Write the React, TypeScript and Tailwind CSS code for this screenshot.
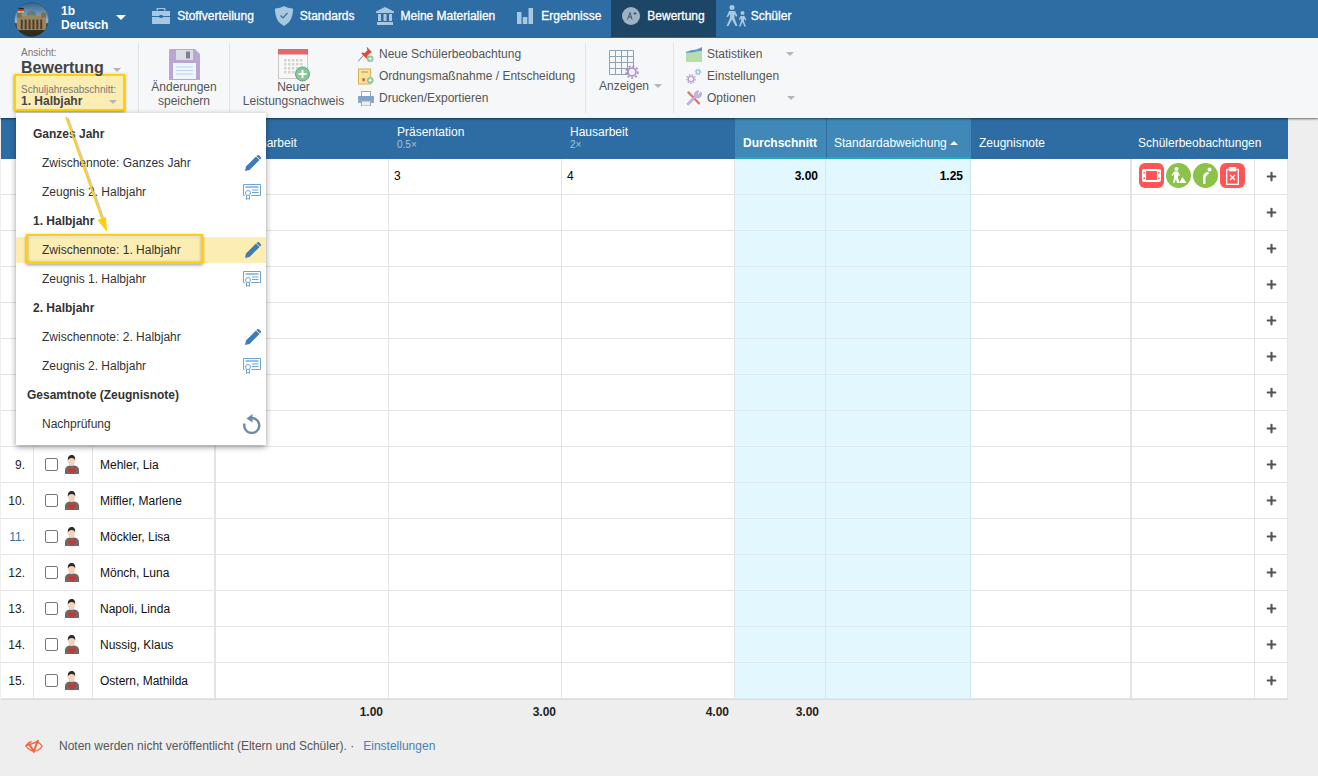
import React from 'react';
import { Plus } from 'lucide-react';

const COLS = 'grid grid-cols-[33px_59px_123px_173px_173px_173px_91px_145px_161px_123px_33px]';

const students: Record<number, string> = {
  9: 'Mehler, Lia',
  10: 'Miffler, Marlene',
  11: 'Möckler, Lisa',
  12: 'Mönch, Luna',
  13: 'Napoli, Linda',
  14: 'Nussig, Klaus',
  15: 'Ostern, Mathilda',
};

const Caret = ({ className = 'border-t-[#b5b5b5]' }: { className?: string }) => (
  <span className={`inline-block w-0 h-0 border-x-[4px] border-x-transparent border-t-[4px] ${className}`} />
);

const Logo = () => (
  <svg width="35" height="35" viewBox="0 0 36 36" className="shrink-0">
    <defs>
      <clipPath id="logoClip"><circle cx="18" cy="18" r="17.500" /></clipPath>
      <linearGradient id="logoSky" x1="0" y1="0" x2="0" y2="1">
        <stop offset="0" stopColor="#2f5f8c" />
        <stop offset="1" stopColor="#a9c3d6" />
      </linearGradient>
    </defs>
    <g clipPath="url(#logoClip)">
      <rect width="36" height="22" fill="url(#logoSky)" />
      <rect y="22" width="36" height="14" fill="#5a4a30" />
      <rect x="3" y="14" width="30" height="15" fill="#9a8560" />
      <path d="M13 14 a5 5 0 0 1 10 0z" fill="#66797c" />
      <rect x="3" y="11" width="5" height="5" fill="#7f6d4c" />
      <rect x="28" y="11" width="5" height="5" fill="#7f6d4c" />
      {[7, 11, 15, 19, 23, 27].map((x) => (
        <rect key={x} x={x} y="18" width="2" height="10" fill="#4b3d28" />
      ))}
      <rect x="4" y="6" width="6" height="1.600" fill="#222" />
      <rect x="4" y="7.600" width="6" height="1.600" fill="#d22" />
      <rect x="4" y="9.200" width="6" height="1.600" fill="#ec3" />
      <rect y="29" width="36" height="7" fill="#2f2c1e" />
      <circle cx="18" cy="18" r="17.500" fill="none" stroke="#1f3346" strokeOpacity="0.500" />
    </g>
  </svg>
);

const NAV = '#a9c8e0';

const navIcons = {
  briefcase: (
    <svg width="18" height="16" viewBox="0 0 18 16" fill={NAV}>
      <path d="M6 2.500V1h6v1.500h1.500V1a1 1 0 0 0-1-1h-7a1 1 0 0 0-1 1v1.500z" />
      <path d="M0 3h18v5H10.500V7h-3v1H0z" />
      <path d="M0 9h7.500v1h3V9H18v7H0z" />
    </svg>
  ),
  shield: (
    <svg width="18" height="20" viewBox="0 0 18 20">
      <path d="M9 0c2.500 1.600 5.500 2.400 9 2.600 0 7.500-1.800 13.600-9 17.400C1.800 16.200 0 10.100 0 2.600 3.500 2.400 6.500 1.600 9 0z" fill={NAV} />
      <path d="M5.500 9.500 8 12l4.500-5" stroke="#2d6da3" strokeWidth="1.200" fill="none" />
    </svg>
  ),
  bank: (
    <svg width="18" height="18" viewBox="0 0 18 18" fill={NAV}>
      <path d="M9 0 18 4.500V6H0V4.500z" />
      <rect x="2" y="7" width="3" height="7" />
      <rect x="7.500" y="7" width="3" height="7" />
      <rect x="13" y="7" width="3" height="7" />
      <rect x="1" y="15" width="16" height="3" />
    </svg>
  ),
  bars: (
    <svg width="16" height="16" viewBox="0 0 16 16" fill={NAV}>
      <rect x="0" y="4" width="4.500" height="12" />
      <rect x="5.800" y="9" width="4.500" height="7" />
      <rect x="11.500" y="0" width="4.500" height="16" />
    </svg>
  ),
  grade: (
    <svg width="18" height="18" viewBox="0 0 18 18">
      <circle cx="9" cy="9" r="9" fill="#9fb2c2" />
      <path d="M5.500 12.500 8 5.500l2 7M6.500 10h3M11.500 6.500h3M13 5v3" stroke="#2c5473" strokeWidth="0.900" fill="none" />
    </svg>
  ),
  people: (
    <svg width="23" height="22" viewBox="0 0 23 22" fill={NAV}>
      <circle cx="7" cy="2.500" r="2.500" />
      <path d="M4 6h6l2.500 5-1.500.8L9.500 9v4l3 8h-2L7 14.500 3.500 21h-2L5 13V9L3 12H1.500z" />
      <circle cx="17.500" cy="8" r="2" />
      <path d="M15.500 11h4l2 4-1.200.6-1.300-2v3l2 5h-1.600L17.500 17l-2 4.600H14l2-5.600v-3l-1 2-1.200-.6z" />
    </svg>
  ),
};

const navItems = [
  { icon: navIcons.briefcase, label: 'Stoffverteilung', cls: 'pl-[10px] pr-[11px]' },
  { icon: navIcons.shield, label: 'Standards', cls: 'pl-[10px] pr-[10px]' },
  { icon: navIcons.bank, label: 'Meine Materialien', cls: 'pl-[11px] pr-[11px]' },
  { icon: navIcons.bars, label: 'Ergebnisse', cls: 'pl-[11px] pr-[10px] !gap-[8px]' },
  { icon: navIcons.grade, label: 'Bewertung', cls: 'pl-[11px] pr-[11px]', active: true },
  { icon: navIcons.people, label: 'Schüler', cls: 'pl-[9px] !gap-[3px]' },
];

const Floppy = () => (
  <svg width="31" height="31" viewBox="0 0 31 31">
    <path d="M1 0h25l5 5v26H0V1z" fill="#b9a6d3" />
    <rect x="7" y="1" width="17" height="10" fill="#dcdce4" />
    <rect x="17" y="2.500" width="4" height="7" fill="#7b8494" />
    <rect x="4" y="14" width="23" height="16" fill="#eef6fb" />
    <path d="M7 18h17M7 21.500h17M7 25h17" stroke="#b7d4e8" strokeWidth="1" />
  </svg>
);

const CalendarAdd = () => (
  <svg width="32" height="33" viewBox="0 0 32 33">
    <rect x="0.500" y="0.500" width="29" height="29" fill="#f8f8f8" stroke="#c9c9c9" />
    <rect x="0" y="0" width="30" height="5.500" fill="#e2676b" />
    {[0, 1, 2, 3].map((r) =>
      [0, 1, 2, 3, 4].map((c) => (
        <rect key={`${r}-${c}`} x={6 + c * 4} y={10 + r * 4} width="2.500" height="2.500" fill="#d3d3d3" />
      ))
    )}
    <circle cx="24.500" cy="25" r="7" fill="#86c79b" stroke="#5fa87b" />
    <path d="M24.500 21v8M20.500 25h8" stroke="#fff" strokeWidth="1.800" />
  </svg>
);

const Pin = () => (
  <svg width="17" height="17" viewBox="0 0 17 17">
    <path d="M0 16 6 9" stroke="#777" strokeWidth="1" />
    <path d="M9 0l6 6-2 .8-3 3 .5 2.500-1 1L3.500 7.500l1-1L7 7l3-3z" fill="#e24a3d" />
    <circle cx="13" cy="13" r="3.500" fill="#86c79b" />
    <path d="M13 11v4M11 13h4" stroke="#fff" />
  </svg>
);

const Order = () => (
  <svg width="17" height="17" viewBox="0 0 17 17">
    <rect x="0.500" y="0.500" width="13" height="16" fill="#f6e3a0" stroke="#d6ae45" />
    <rect x="3.500" y="3" width="7" height="1.500" fill="#c9a850" />
    <circle cx="6" cy="12" r="1.800" fill="#d86a5c" />
    <circle cx="13" cy="12.500" r="3.500" fill="#86c79b" />
    <path d="M13 10.500v4M11 12.500h4" stroke="#fff" />
  </svg>
);

const Printer = () => (
  <svg width="16" height="15" viewBox="0 0 16 15">
    <rect x="3.500" y="0.500" width="9" height="5" fill="#fff" stroke="#9aa8b8" />
    <rect x="0" y="5" width="16" height="4" rx="1" fill="#7ea2cf" />
    <rect x="0" y="9" width="16" height="3" fill="#9aa7b4" />
    <rect x="3.500" y="10" width="9" height="5" fill="#e8eef4" stroke="#9aa8b8" />
  </svg>
);

const GridGear = () => (
  <svg width="30" height="30" viewBox="0 0 30 30">
    <path d="M.5.500h24v24H.5zM.5 6.500h24M.5 12.500h24M.5 18.500h24M6.500.500v24M12.500.500v24M18.500.500v24" fill="none" stroke="#8fa3b3" />
    <circle cx="23" cy="22" r="4" fill="#f3f0f8" stroke="#a68fc9" strokeWidth="1.600" />
    <circle cx="23" cy="22" r="6" fill="none" stroke="#a68fc9" strokeWidth="1.600" strokeDasharray="2 2" />
  </svg>
);

const ChartArea = () => (
  <svg width="16" height="15" viewBox="0 0 16 15">
    <path d="M0 5c3-1 4-2 7-2s5-1 9-3v8H0z" fill="#5b93d3" />
    <path d="M0 6c3-1 5 0 8-1s5-1 8-1v11H0z" fill="#b7dcae" />
  </svg>
);

const Gears = () => (
  <svg width="16" height="16" viewBox="0 0 16 16">
    <circle cx="5" cy="11" r="2.800" fill="#f6f7f9" stroke="#b8a6d8" strokeWidth="1.600" />
    <circle cx="5" cy="11" r="4.400" fill="none" stroke="#b8a6d8" strokeWidth="1.200" strokeDasharray="1.500 1.500" />
    <circle cx="12" cy="4" r="1.800" fill="none" stroke="#8cc4e0" strokeWidth="1.300" />
    <circle cx="12" cy="4" r="3" fill="none" stroke="#8cc4e0" strokeWidth="1" strokeDasharray="1.200 1.200" />
  </svg>
);

const Tools = () => (
  <svg width="16" height="16" viewBox="0 0 16 16">
    <path d="M1 2.500 2.500 1 6 4.500l8 8.500a1.300 1.300 0 0 1-1.500 1.500L4.500 6z" fill="#ec6a5e" />
    <path d="M15 2 12.500 4.500 11 3.500l2-2.500a3.800 3.800 0 0 0-4.500 4.800L1 13.500c-.3.800.5 1.800 1.500 1.500l7.700-7.500A3.800 3.800 0 0 0 15 2z" fill="#c4b5e0" stroke="#9f8cc0" strokeWidth="0.500" />
  </svg>
);

const Pencil = () => (
  <svg width="16" height="16" viewBox="0 0 16 16" fill="#3d7cb5">
    <path d="M0 16l1-4.500L11 1.500l3.500 3.500-10 10z" />
    <path d="M12 .5c.7-.7 1.500-.7 2.200 0l1.300 1.300c.7.7.7 1.500 0 2.200L15 4.500 11.500 1z" />
  </svg>
);

const Certificate = () => (
  <svg width="18" height="16" viewBox="0 0 18 16" fill="none" stroke="#6aa5d6">
    <path d="M1.800 11.500H.5v-11h17v11H8.200" />
    <path d="M2.500 3h13" strokeWidth="1.400" />
    <path d="M9 6h6.500M9 8.500h6.500" />
    <circle cx="5" cy="9" r="2.500" />
    <path d="M3.500 11.500V15.500L5 14.300l1.500 1.200v-4" />
  </svg>
);

const Undo = () => (
  <svg width="18" height="20" viewBox="0 0 18 20" fill="none">
    <path d="M6 4.500a7.500 7.500 0 1 1-4.500 5" stroke="#6e8da3" strokeWidth="2.400" />
    <path d="M9.500 0v8.500L3.500 4.500z" fill="#6e8da3" />
  </svg>
);

const Person = () => (
  <svg width="14" height="19" viewBox="0 0 14 19" className="shrink-0">
    <path d="M0 19v-4C0 12 2.500 11 4.500 10.500h5c2 .5 4.500 1.500 4.500 4.500v4z" fill="#6b6b6b" />
    <path d="M4 11l3 3.500 3-3.500 .8 4.500L7 19l-3.800-3.500z" fill="#d0332e" />
    <ellipse cx="6.500" cy="6" rx="3.500" ry="4.800" fill="#f6d2bd" />
    <path d="M2.800 5.500C2.500 1.500 4.500 0 6.700 0c2.300 0 3.800 1.500 3.500 5.500-.5-1.500-1.500-2.500-3.500-2.500S3.500 4 2.800 5.500z" fill="#2b2b2b" />
  </svg>
);

const EyeOff = () => (
  <svg width="18" height="14" viewBox="0 0 18 14" fill="none" stroke="#f4633c" strokeWidth="1.300">
    <path d="M.8 7C2.800 4.300 4.500 3 6.500 2.500M12 2.800c2.200.8 3.800 2.200 5.200 4.200C15 10.500 12 12 9 12c-1 0-2-.2-3-.6C3.800 10.600 2.200 9 .8 7z" />
    <path d="M4.500 5.500 8.800 12.500 13 1" strokeWidth="2" />
  </svg>
);

const ObsIcon = ({ round, color, children }: { round?: boolean; color: string; children: React.ReactNode }) => (
  <span className={`w-[25px] h-[25px] flex items-center justify-center ${round ? 'rounded-full' : 'rounded-[6px]'} ${color}`}>
    {children}
  </span>
);

const ToolButton = ({ icon, label, caret }: { icon: React.ReactNode; label: string; caret?: boolean }) => (
  <div className="flex items-center h-[22px]">
    <span className="w-[16px] flex justify-center shrink-0">{icon}</span>
    <span className="ml-[5px]">{label}</span>
    {caret && <span className="ml-[24px] flex"><Caret /></span>}
  </div>
);

const Ribbon = () => (
  <div className="h-[80px] bg-[#f6f7f9] flex py-[5px] text-[12px] leading-[14px] text-[#555] shadow-[0_1px_2px_rgba(0,0,0,0.55)] relative z-10">
    <div className="w-[139px] border-r border-[#e2e3e5] pl-[14px] pt-[5px]">
      <div className="pl-[7px] text-[10px] leading-[10px] text-[#777]">Ansicht:</div>
      <div className="pl-[7px] flex items-center h-[16px] pt-[4px]">
        <span className="text-[16px] font-bold text-[#444]">Bewertung</span>
        <span className="ml-[9px] mt-[3px] flex"><Caret /></span>
      </div>
      <div className="w-[111px] h-[37px] border-[2.500px] border-[#ffcf0a] bg-[#fcedb2] pl-[5px] pr-[6px] pt-[8px] shadow-[0_1px_3px_rgba(0,0,0,0.45)]">
        <div className="text-[10px] leading-[11px] text-[#777]">Schuljahresabschnitt:</div>
        <div className="flex items-center justify-between">
          <span className="text-[12px] font-bold text-[#444] leading-[13px]">1. Halbjahr</span>
          <Caret />
        </div>
      </div>
    </div>
    <div className="w-[91px] border-r border-[#e2e3e5] flex flex-col items-center pt-[6px]">
      <Floppy />
      <div className="text-center">Änderungen<br />speichern</div>
    </div>
    <div className="w-[356px] border-r border-[#e2e3e5] flex">
      <div className="w-[127px] flex flex-col items-center pt-[6px]">
        <CalendarAdd />
        <div className="text-center mt-[-2px]"><span>Neuer</span><br />Leistungsnachweis</div>
      </div>
      <div className="pl-px">
        <ToolButton icon={<Pin />} label="Neue Schülerbeobachtung" />
        <ToolButton icon={<Order />} label="Ordnungsmaßnahme / Entscheidung" />
        <ToolButton icon={<Printer />} label="Drucken/Exportieren" />
      </div>
    </div>
    <div className="w-[88px] border-r border-[#e2e3e5] flex flex-col pl-[13px] pt-[7px]">
      <span className="pl-[10px]"><GridGear /></span>
      <div className="flex items-center mt-[-1px]">
        <span>Anzeigen</span>
        <span className="ml-[5px] flex"><Caret /></span>
      </div>
    </div>
    <div className="pl-[12px]">
      <ToolButton icon={<ChartArea />} label="Statistiken" caret />
      <ToolButton icon={<Gears />} label="Einstellungen" />
      <div className="flex items-center h-[22px]">
        <span className="w-[16px] flex justify-center shrink-0"><Tools /></span>
        <span className="ml-[5px]">Optionen</span>
        <span className="ml-[31px] flex"><Caret /></span>
      </div>
    </div>
  </div>
);

const HeaderCell = ({ label, weight, className = '', children }: { label?: string; weight?: string; className?: string; children?: React.ReactNode }) => (
  <div className={`flex flex-col justify-end pb-[9px] pl-[8px] text-[12px] leading-[14px] text-white ${className}`}>
    {label && <span className="flex items-center">{label}{children}</span>}
    {weight && <span className="text-[10px] leading-[12px] text-[#a7c3da]">{weight}</span>}
  </div>
);

const TableHeader = () => (
  <div className={`${COLS} h-[41px] w-[1287px] bg-[#2d6da3] ml-px`}>
    <div className="col-span-3" />
    <HeaderCell label="Klassenarbeit" />
    <HeaderCell label="Präsentation" weight="0.5×" className="!pb-[8px]" />
    <HeaderCell label="Hausarbeit" weight="2×" className="!pb-[8px]" />
    <HeaderCell label="Durchschnitt" className="bg-[#3f88b8] border-b-2 border-b-[#1fa8bf] font-bold !pb-[7px]" />
    <HeaderCell
      label="Standardabweichung"
      className="bg-[#3f88b8] border-l border-l-[#2d6da3] border-b-2 border-b-[#1fa8bf] !pb-[7px] !pl-[7px]"
    >
      <span className="ml-[3px] w-0 h-0 border-x-[4px] border-x-transparent border-b-[4px] border-b-white" />
    </HeaderCell>
    <HeaderCell label="Zeugnisnote" />
    <HeaderCell label="Schülerbeobachtungen" className="col-span-2 !pl-[6px]" />
  </div>
);

const Row = ({ n }: { n: number }) => {
  const name = students[n];
  const cell = 'border-r border-[#e4e4e4] border-b flex items-center';
  const teal = 'bg-[#e3f7fe] border-b border-b-[#d5ecf4] border-r border-r-[#cfe7ef] flex items-center justify-end pr-[7px] font-bold text-black';
  return (
    <div className={`${COLS} h-[36px] w-[1287px] bg-white text-[12px] text-[#222]`}>
      <div className={`${cell} justify-end pr-[8px] ${n === 11 ? 'text-[#2a76b5]' : ''}`}>{name ? `${n}.` : ''}</div>
      <div className={`${cell} pl-[11px] gap-[7px]`}>
        {name && <span className="w-[13px] h-[13px] border border-[#767676] rounded-[2px] bg-white shrink-0" />}
        {name && <Person />}
      </div>
      <div className={`${cell} border-r-2 pl-[7px] text-[#111]`}>{name}</div>
      <div className={cell} />
      <div className={`${cell} pl-[5px] pb-[2px] text-black`}>{n === 1 ? '3' : ''}</div>
      <div className={`${cell} pl-[5px] pb-[2px] text-black`}>{n === 1 ? '4' : ''}</div>
      <div className={`${teal} pb-[2px]`}>{n === 1 ? '3.00' : ''}</div>
      <div className={`${teal} pb-[2px]`}>{n === 1 ? '1.25' : ''}</div>
      <div className={`${cell} border-r-2`} />
      <div className={`${cell} pl-[7px] gap-[2px] pb-[2px]`}>
        {n === 1 && (
          <>
            <ObsIcon color="bg-[#ff5555]">
              <svg width="19" height="13" viewBox="0 0 19 13" fill="#fff">
                <path d="M0 2a2 2 0 0 1 2-2h15a2 2 0 0 1 2 2v9a2 2 0 0 1-2 2H2a2 2 0 0 1-2-2zM4 2v9h11V2zM1.500 3v1.500H3V3zM16 3v1.500h1.500V3zM16 8.500V10h1.500V8.500zM1.500 8.500V10H3V8.500z" fillRule="evenodd" />
              </svg>
            </ObsIcon>
            <ObsIcon round color="bg-[#8bc34a]">
              <svg width="17" height="17" viewBox="0 0 17 17" fill="#fff">
                <circle cx="6.500" cy="2" r="2" />
                <path d="M4 4.500h4l2 4-1 .5-1-1.500V11l1.500 5H7L6 12l-1.500 4H3l1-5V7L2.500 9 1.500 8.500z" />
                <path d="M9 16l3.500-6 4 6z" />
              </svg>
            </ObsIcon>
            <ObsIcon round color="bg-[#8bc34a]">
              <svg width="13" height="17" viewBox="0 0 13 17" fill="#fff">
                <circle cx="10.500" cy="2.500" r="2" />
                <path d="M9 5c-3 0-5 2.500-5 5.500V17h2.500v-5c0-2 .5-3.500 2.500-4.500 1-.5 1-2.500 0-2.500z" />
              </svg>
            </ObsIcon>
            <ObsIcon color="bg-[#ff5555]">
              <svg width="13" height="18" viewBox="0 0 13 18" fill="none" stroke="#fff" strokeWidth="1.300">
                <rect x="0.700" y="2.500" width="11.600" height="14.800" />
                <rect x="3.500" y="0.700" width="6" height="3" fill="#fff" />
                <path d="M4 8l5 5M9 8l-5 5" />
              </svg>
            </ObsIcon>
          </>
        )}
      </div>
      <div className={`${cell} justify-center pb-[1px]`}>
        <Plus size={13} strokeWidth={4} className="text-[#555]" />
      </div>
    </div>
  );
};

const menu: { label: string; kind: 'head' | 'top' | 'item'; icon?: 'pen' | 'cert' | 'undo'; active?: boolean }[] = [
  { label: 'Ganzes Jahr', kind: 'head' },
  { label: 'Zwischennote: Ganzes Jahr', kind: 'item', icon: 'pen' },
  { label: 'Zeugnis 2. Halbjahr', kind: 'item', icon: 'cert' },
  { label: '1. Halbjahr', kind: 'head' },
  { label: 'Zwischennote: 1. Halbjahr', kind: 'item', icon: 'pen', active: true },
  { label: 'Zeugnis 1. Halbjahr', kind: 'item', icon: 'cert' },
  { label: '2. Halbjahr', kind: 'head' },
  { label: 'Zwischennote: 2. Halbjahr', kind: 'item', icon: 'pen' },
  { label: 'Zeugnis 2. Halbjahr', kind: 'item', icon: 'cert' },
  { label: 'Gesamtnote (Zeugnisnote)', kind: 'top' },
  { label: 'Nachprüfung', kind: 'item', icon: 'undo' },
];

const PeriodMenu = () => (
  <div className="absolute left-[16px] top-[113px] w-[250px] h-[332px] bg-white pt-[8px] shadow-[0_2px_6px_rgba(0,0,0,0.4)] z-20 text-[12px] text-[#333]">
    {menu.map((m, i) => (
      <div
        key={i}
        className={`h-[26px] mb-[3px] flex items-center justify-between pr-[5px] ${
          m.kind === 'head' ? 'pl-[17px] font-bold' : m.kind === 'top' ? 'pl-[11px] font-bold' : 'pl-[26px]'
        } ${m.active ? 'bg-[#fcedb2]' : ''}`}
      >
        <span>{m.label}</span>
        {m.icon === 'pen' && <Pencil />}
        {m.icon === 'cert' && <Certificate />}
        {m.icon === 'undo' && <Undo />}
      </div>
    ))}
  </div>
);

const Callout = () => (
  <>
    <div className="absolute left-[26px] top-[234px] w-[177px] h-[30px] border-[2.500px] border-[#ffcf0a] shadow-[0_1px_3px_rgba(0,0,0,0.4),inset_0_0_3px_rgba(0,0,0,0.3)] z-30" />
    <svg className="absolute left-[60px] top-[112px] z-30" width="60" height="124" viewBox="0 0 60 124">
      <path d="M7 5 43 107" stroke="#999" strokeWidth="1.800" opacity="0.500" transform="translate(1 1)" />
      <path d="M6 5 42 107" stroke="#ffcf0a" strokeWidth="1.800" />
      <path d="M37.500 108 46 105 47 120z" fill="#ffcf0a" />
    </svg>
  </>
);

export default function App() {
  return (
    <div className="relative min-h-[776px] w-[1318px] overflow-hidden bg-[#eeeeee] font-['Liberation_Sans',Arial,sans-serif]">
      <div className="h-[38px] bg-[#2d6da3] flex items-stretch text-white relative z-10">
        <div className="pl-[14px] flex items-center">
          <Logo />
          <div className="ml-[12px] text-[12px] font-bold leading-[14px] pb-[2px]">1b<br />Deutsch</div>
          <span className="ml-[8px] mr-[16px] pb-[3px] flex"><Caret className="border-t-white !border-x-[5px] !border-t-[5px]" /></span>
        </div>
        {navItems.map((item) => (
          <div
            key={item.label}
            className={`flex items-center gap-[7px] h-[37px] pb-[6px] text-[12px] [-webkit-text-stroke:0.3px_white] ${item.cls} ${item.active ? 'bg-[#1c4566]' : ''}`}
          >
            {item.icon}
            <span>{item.label}</span>
          </div>
        ))}
      </div>
      <Ribbon />
      <TableHeader />
      <div className="ml-px">
        {Array.from({ length: 15 }, (_, i) => (
          <Row key={i} n={i + 1} />
        ))}
      </div>
      <div className={`${COLS} w-[1287px] ml-px border-t border-t-[#ddd] pt-[5px] text-[12px] leading-[14px] font-bold text-[#222]`}>
        <div className="col-span-3" />
        <div className="text-right pr-[6px]">1.00</div>
        <div className="text-right pr-[6px]">3.00</div>
        <div className="text-right pr-[6px]">4.00</div>
        <div className="text-right pr-[7px]">3.00</div>
      </div>
      <div className="flex items-center pl-[25px] mt-[18px] text-[12px] text-[#555]">
        <EyeOff />
        <span className="ml-[16px]">Noten werden nicht veröffentlicht (Eltern und Schüler). ·</span>
        <span className="ml-[9px] text-[#4a7fb5]">Einstellungen</span>
      </div>
      <PeriodMenu />
      <Callout />
    </div>
  );
}
